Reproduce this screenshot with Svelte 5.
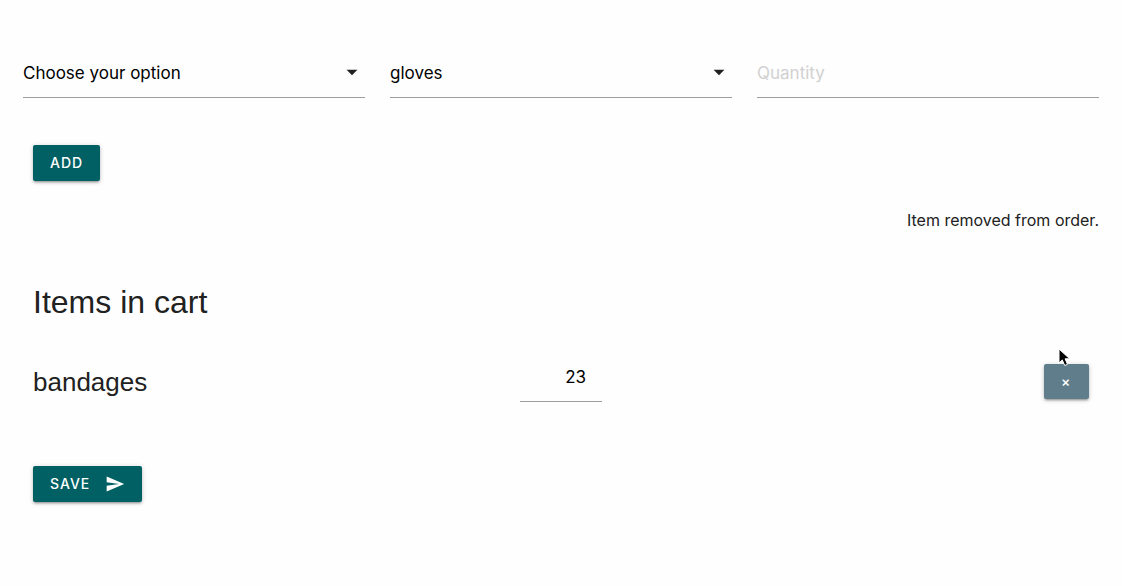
<script>
  let product = $state('');
  let item = $state('gloves');
  let quantity = $state('');
  let cartQuantity = $state(23);
</script>

<main>
  <form class="picker" onsubmit={(e) => e.preventDefault()}>
    <div class="select">
      <select aria-label="Category" bind:value={product}>
        <option value="">Choose your option</option>
      </select>
      <svg viewBox="0 0 24 24" aria-hidden="true"><path d="M7 10l5 5 5-5z" /></svg>
    </div>
    <div class="select">
      <select aria-label="Item" bind:value={item}>
        <option value="gloves">gloves</option>
        <option value="bandages">bandages</option>
      </select>
      <svg viewBox="0 0 24 24" aria-hidden="true"><path d="M7 10l5 5 5-5z" /></svg>
    </div>
    <input aria-label="Quantity" placeholder="Quantity" inputmode="numeric" bind:value={quantity} />
  </form>

  <div class="action"><button type="button">Add</button></div>
  <p class="message" role="status">Item removed from order.</p>

  <section>
    <h1>Items in cart</h1>
    <div class="row">
      <h2>bandages</h2>
      <input class="amount" aria-label="Quantity of bandages" inputmode="numeric" bind:value={cartQuantity} />
      <div class="remove">
        <button type="button" aria-label="Remove bandages">×</button>
        <svg class="pointer" viewBox="0 0 13 19" aria-hidden="true">
          <path d="M1 1v14l3.300-3.100 2.400 5.600 2.800-1.200-2.400-5.500h4.600z" />
        </svg>
      </div>
    </div>
  </section>

  <div class="save">
    <button type="button">
      Save
      <svg viewBox="0 0 24 24" aria-hidden="true"><path d="M2.010 21L23 12 2.010 3 2 10l15 2-15 2z" /></svg>
    </button>
  </div>
</main>

<style>
  :global(body) {
    margin: 0;
    background: #fefefe;
  }

  main {
    padding: 49px 23px 80px;
    font-family: Inter, "Liberation Sans", sans-serif;
    color: #212121;
  }

  .picker {
    display: grid;
    grid-template-columns: repeat(3, 1fr);
    gap: 25px;
  }

  .select {
    position: relative;
  }

  select,
  input {
    box-sizing: border-box;
    display: block;
    width: 100%;
    height: 49px;
    margin: 0;
    padding: 0;
    border: 0;
    border-bottom: 1px solid #9e9e9e;
    border-radius: 0;
    outline: 0;
    background: transparent;
    color: #000;
    font: 17px/48px Inter, "Liberation Sans", sans-serif;
    appearance: none;
  }

  input::placeholder {
    color: #d1d1d1;
    opacity: 1;
  }

  .select svg {
    position: absolute;
    top: 10px;
    right: 0;
    width: 26px;
    height: 26px;
    fill: #212121;
    pointer-events: none;
  }

  button {
    display: inline-flex;
    align-items: center;
    gap: 15px;
    height: 36px;
    padding: 0 17px;
    border: 0;
    border-radius: 2px;
    background: #006064;
    color: #fff;
    font: 500 14px/36px Inter, "Liberation Sans", sans-serif;
    letter-spacing: 1px;
    text-transform: uppercase;
    box-shadow: 0 2px 2px rgb(0 0 0 / 14%), 0 3px 1px -2px rgb(0 0 0 / 12%), 0 1px 5px rgb(0 0 0 / 20%);
    cursor: pointer;
  }

  .action {
    display: flex;
    padding: 47px 10px 0;
  }

  .message {
    margin: 27px 0 0;
    font-size: 16px;
    line-height: 24px;
    text-align: right;
  }

  section {
    padding: 0 10px;
  }

  h1,
  h2 {
    margin: 0;
    font-family: "Liberation Sans", Arial, sans-serif;
    font-weight: 400;
  }

  h1 {
    padding-top: 50px;
    font-size: 32px;
    line-height: 40px;
  }

  .row {
    display: grid;
    grid-template-columns: 1fr 82px 1fr;
    align-items: center;
    margin-top: 31px;
  }

  h2 {
    padding-top: 9px;
    font-size: 26px;
    line-height: 32px;
  }

  .amount {
    padding-right: 16px;
    text-align: right;
  }

  .remove {
    position: relative;
    justify-self: end;
    padding-top: 8px;
  }

  .remove button {
    min-width: 45px;
    height: 35px;
    background: #607d8b;
  }

  .pointer {
    position: absolute;
    top: -8px;
    left: 14px;
    width: 13px;
    height: 19px;
    fill: #000;
    stroke: #fff;
    stroke-width: 1;
    pointer-events: none;
  }

  .save {
    display: flex;
    padding: 64px 10px 0;
  }

  .save svg {
    width: 20px;
    height: 20px;
    fill: #fff;
  }
</style>
